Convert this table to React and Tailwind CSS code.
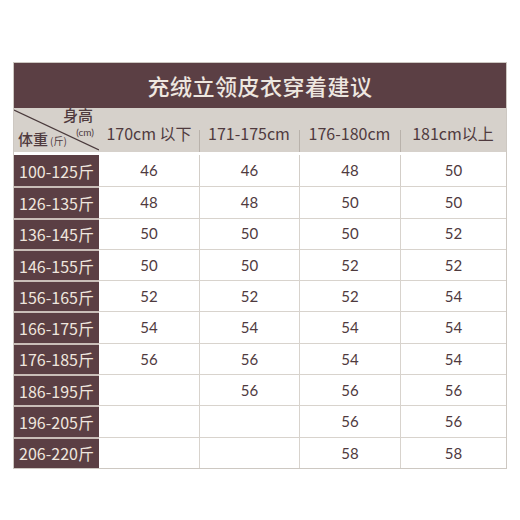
import React from "react";

const cols = ["170cm 以下", "171-175cm", "176-180cm", "181cm以上"];
const rows = [
  ["100-125斤", "46", "46", "48", "50"],
  ["126-135斤", "48", "48", "50", "50"],
  ["136-145斤", "50", "50", "50", "52"],
  ["146-155斤", "50", "50", "52", "52"],
  ["156-165斤", "52", "52", "52", "54"],
  ["166-175斤", "54", "54", "54", "54"],
  ["176-185斤", "56", "56", "54", "54"],
  ["186-195斤", "", "56", "56", "56"],
  ["196-205斤", "", "", "56", "56"],
  ["206-220斤", "", "", "58", "58"],
];

const cjk = { fontFamily: '"Noto Sans CJK SC", "Noto Sans", sans-serif' };
const num = { fontFamily: 'Lato, "Noto Sans CJK SC", sans-serif' };

export default function App() {
  return (
    <div className="w-[520px] h-[520px] bg-white pt-[62px] pl-[13px]" style={cjk}>
      <div className="w-[494px] border border-[#cdc8c2]">
        <div className="h-[45px] bg-[#5b3f44] flex items-center justify-center text-[#eee7e0] text-[22px] font-medium tracking-[0.5px]">
          充绒立领皮衣穿着建议
        </div>
        <div className="grid grid-cols-[85px_100px_100px_101px_106px] h-[44px] bg-[#d6d1cb]">
          <div className="relative">
            <svg className="absolute inset-0" width="85" height="44" viewBox="0 0 85 44">
              <line x1="0" y1="2" x2="85" y2="42" stroke="#4a3a3c" strokeWidth="1.2" />
            </svg>
            <div className="absolute right-[6px] top-[-1px] text-[15px] leading-[16px] text-[#4f3a3e] font-medium">身高</div>
            <div className="absolute right-[5px] top-[19px] text-[10px] leading-[10px] text-[#4f3a3e]" style={num}>(cm)</div>
            <div className="absolute left-[4px] bottom-[4px] flex items-end text-[#4f3a3e]">
              <span className="text-[15px] leading-[18px] font-medium">体重</span>
              <span className="text-[10px] leading-[14px] ml-[2px]">(斤)</span>
            </div>
          </div>
          {cols.map((c, i) => (
            <div key={c} className="relative flex items-center justify-center text-[16px] text-[#4f3a3e] pt-[6px]">
              {i > 0 && <span className="absolute left-0 bottom-0 h-[22px] w-px bg-[#b9b2ab]" />}
              <span>{c}</span>
            </div>
          ))}
        </div>
        <div className="h-[3px] bg-white" />
        {rows.map((r, ri) => (
          <div
            key={r[0]}
            className="grid grid-cols-[85px_100px_100px_101px_106px] h-[31.3px]"
          >
            <div
              className={
                "bg-[#5b3f44] flex items-center justify-center text-[16px] text-[#efe6de] " +
                (ri > 0 ? "border-t-2 border-[#c9beb8]" : "")
              }
            >
              {r[0]}
            </div>
            {r.slice(1).map((v, ci) => (
              <div
                key={ci}
                className={
                  "flex items-center justify-center text-[15px] text-[#4f3a3e] " +
                  (ri > 0 ? "border-t border-[#d8d3cd] " : "") +
                  (ci > 0 ? "border-l border-[#d3cec8]" : "")
                }
                style={num}
              >
                {v}
              </div>
            ))}
          </div>
        ))}
      </div>
    </div>
  );
}
